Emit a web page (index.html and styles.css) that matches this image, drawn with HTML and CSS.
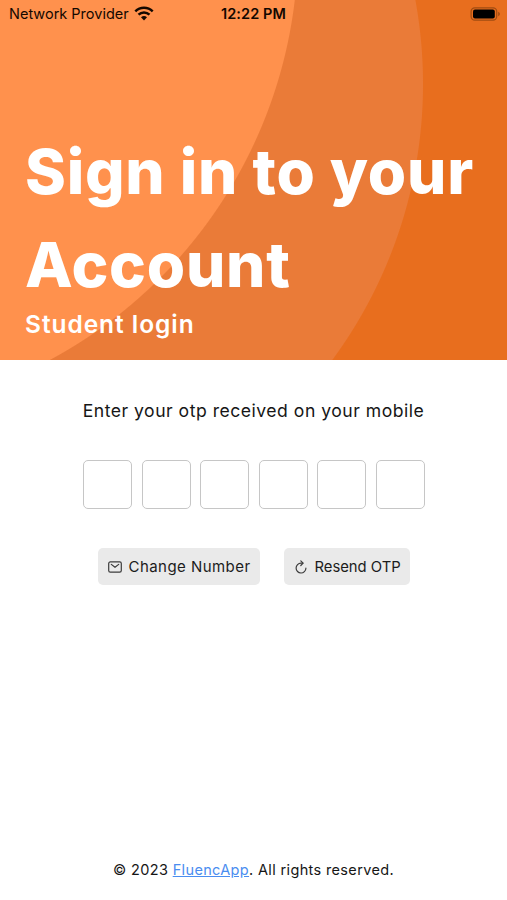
FILE: index.html
```
<!DOCTYPE html>
<html lang="en">
<head>
  <meta charset="utf-8">
  <meta name="viewport" content="width=device-width,initial-scale=1.0">
  <title>Student login</title>
  <link rel="stylesheet" href="styles.css">
</head>
<body>

  <header class="hero">
    <div class="status-bar">
      <div class="carrier">
        <span class="carrier-name">Network Provider</span>
        <svg class="wifi" width="20" height="15" viewBox="0 0 20 15" fill="none" stroke="#140800" stroke-width="2.5">
          <path d="M1.3 5.3a12.6 12.6 0 0 1 17.4 0" />
          <path d="M4.5 8.7a8 8 0 0 1 11 0" />
          <path d="M10 14.4l-3-3.1a4.4 4.4 0 0 1 6 0z" fill="#140800" stroke="none" />
        </svg>
      </div>
      <span class="time">12:22 PM</span>
      <svg class="battery" width="31" height="14" viewBox="0 0 31 14">
        <rect x="1.1" y="0.8" width="25.6" height="12.4" rx="3.6" fill="none" stroke="#a04c12" stroke-width="1.2" />
        <rect x="3" y="2.6" width="21.8" height="8.8" rx="2" fill="#000" />
        <path d="M28.2 4.8c2.2.8 2.2 3.6 0 4.4z" fill="#a04c12" />
      </svg>
    </div>
    <h1>Sign in to your<br>Account</h1>
    <h2>Student login</h2>
  </header>

  <main>
    <form id="otp-form" action="">
      <p class="hint">Enter your otp received on your mobile</p>
      <div class="otp">
        <input maxlength="1" inputmode="numeric" autocomplete="off" />
        <input maxlength="1" inputmode="numeric" autocomplete="off" />
        <input maxlength="1" inputmode="numeric" autocomplete="off" />
        <input maxlength="1" inputmode="numeric" autocomplete="off" />
        <input maxlength="1" inputmode="numeric" autocomplete="off" />
        <input maxlength="1" inputmode="numeric" autocomplete="off" />
      </div>
      <div class="actions">
        <button type="button" class="change">
          <svg width="14" height="12" viewBox="0 0 14 12" fill="none" stroke="#3c3c3c" stroke-width="1.2" stroke-linecap="round" stroke-linejoin="round">
            <rect x="0.7" y="0.9" width="12.6" height="10.2" rx="1.6" />
            <path d="M3.3 3.4L7 6.3l3.7-2.9" />
          </svg>
          <span>Change Number</span>
        </button>
        <button type="button" class="resend">
          <svg width="14" height="14" viewBox="0 0 14 14" fill="none" stroke="#3c3c3c" stroke-width="1.2" stroke-linecap="round" stroke-linejoin="round">
            <path d="M8.8 3.2H7a4.9 4.9 0 1 0 4.9 5" />
            <path d="M6.8 0.9l2.3 2.3-2.3 2.3" />
          </svg>
          <span>Resend OTP</span>
        </button>
      </div>
    </form>
  </main>

  <footer>© 2023 <a href="#">FluencApp</a>. All rights reserved.</footer>

</body>
</html>
```

FILE: styles.css
```
* { box-sizing: border-box; }
body { margin: 0; min-height: 100vh; display: flex; flex-direction: column; background: #fff; color: #161616; font-family: Inter, "Open Sans", sans-serif; }

.hero {
  height: 360px;
  padding: 0 26px;
  color: #fff;
  background:
    radial-gradient(circle at -173px -55px, #ff914d 470.5px, transparent 471.5px),
    radial-gradient(circle at -42px 84px, #ea7b38 464.5px, transparent 465.5px),
    #e86e1e;
}
.hero h1 { margin: 98px 0 0 -1px; font-size: 62px; line-height: 93px; font-weight: 800; letter-spacing: 0.75px; white-space: nowrap; }
.hero h2 { margin: 0 0 0 -1px; padding-top: 1px; font-size: 24.5px; line-height: 24px; font-weight: 600; letter-spacing: 0.95px; }

.status-bar { height: 27px; margin: 0 -17px; display: grid; grid-template-columns: 1fr auto 1fr; align-items: center; color: #140800; }
.carrier { display: flex; align-items: center; gap: 5px; }
.carrier-name { font-size: 14.5px; }
.time { font-size: 14.5px; font-weight: 600; letter-spacing: 0.1px; }
.battery { justify-self: end; margin-right: -3px; }

#otp-form { display: flex; flex-direction: column; align-items: center; }
.hint { margin: 39px 0 0; font-size: 17.6px; line-height: 24px; letter-spacing: 0.5px; white-space: nowrap; }
.otp { display: flex; gap: 9.6px; margin: 37px 0 0 1px; }
.otp input { width: 49px; height: 49px; padding: 0; margin-bottom: 1px; border: 1px solid #c6c6c6; border-radius: 5px; background: #fff; text-align: center; font-size: 20px; }
.otp input:focus { outline: none; }

.actions { display: flex; gap: 24px; margin-top: 38px; }
.actions button { display: flex; align-items: center; gap: 7px; height: 37px; padding: 0 0 0 10px; border: none; border-radius: 5px; background: #eaeaea; color: #1c1c1c; font-family: inherit; white-space: nowrap; }
.actions svg { flex: none; }
.change { width: 162px; font-size: 15px; letter-spacing: 0.45px; }
.resend { width: 126px; font-size: 14.8px; }

footer { margin-top: auto; height: 40px; line-height: 20px; text-align: center; font-size: 14.5px; letter-spacing: 0.35px; }
footer a { color: #4a8df0; }
```
